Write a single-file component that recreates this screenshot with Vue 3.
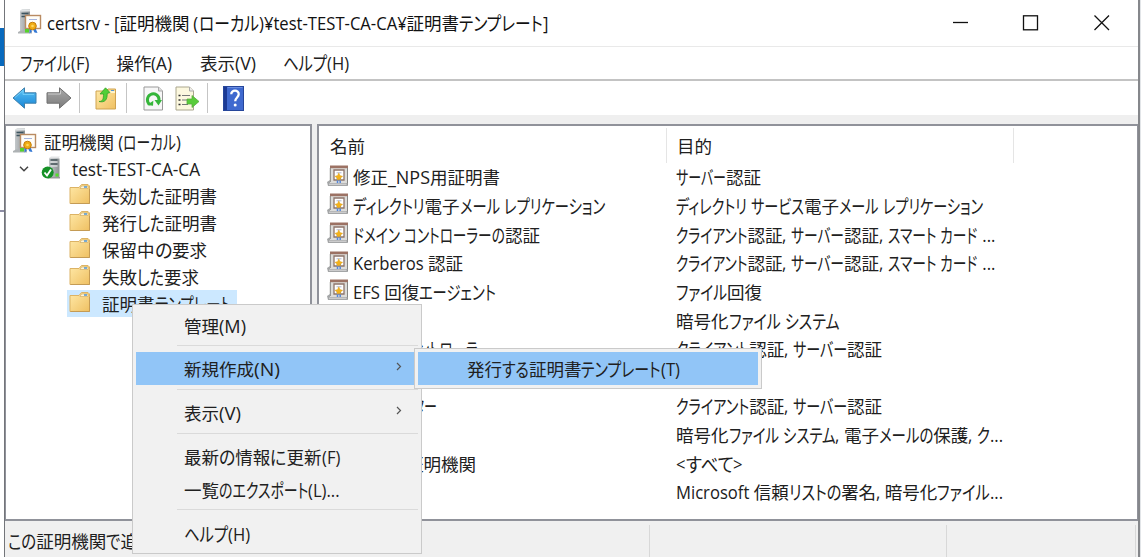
<script setup>
const treeItems = [
  { text: '失効した証明書', w: 115 },
  { text: '発行した証明書', w: 115 },
  { text: '保留中の要求', w: 105 },
  { text: '失敗した要求', w: 97 },
  { text: '証明書テンプレート', w: 129, selected: true },
]

const menus = [
  { text: 'ファイル(F)', w: 69 },
  { text: '操作(A)', w: 56 },
  { text: '表示(V)', w: 56 },
  { text: 'ヘルプ(H)', w: 66 },
]

const rows = [
  { name: '修正_NPS用証明書', nw: 147, use: 'サーバー認証', uw: 85 },
  { name: 'ディレクトリ電子メール レプリケーション', nw: 252, use: 'ディレクトリ サービス電子メール レプリケーション', uw: 307 },
  { name: 'ドメイン コントローラーの認証', nw: 187, use: 'クライアント認証, サーバー認証, スマート カード ...', uw: 319 },
  { name: 'Kerberos 認証', nw: 110, use: 'クライアント認証, サーバー認証, スマート カード ...', uw: 319 },
  { name: 'EFS 回復エージェント', nw: 143, use: 'ファイル回復', uw: 86 },
  { name: '', nw: 0, use: '暗号化ファイル システム', uw: 163 },
  { name: 'ドメイン コントローラー', nw: 138, use: 'クライアント認証, サーバー認証', uw: 206 },
  { name: '', nw: 0, use: '', uw: 0 },
  { name: 'コンピューター', nw: 84, use: 'クライアント認証, サーバー認証', uw: 206 },
  { name: '', nw: 0, use: '暗号化ファイル システム, 電子メールの保護, ク...', uw: 327 },
  { name: '下位の証明機関', nw: 123, use: '<すべて>', uw: 67 },
  { name: '', nw: 0, use: 'Microsoft 信頼リストの署名, 暗号化ファイル...', uw: 327 },
]

const context = [
  { text: '管理(M)', w: 62 },
  { sep: true },
  { text: '新規作成(N)', w: 96, sub: true, hot: true },
  { sep: true },
  { text: '表示(V)', w: 57, sub: true },
  { sep: true },
  { text: '最新の情報に更新(F)', w: 156 },
  { text: '一覧のエクスポート(L)...', w: 156 },
  { sep: true },
  { text: 'ヘルプ(H)', w: 66 },
]

/* Sets a label in proportional kana: ideographs keep their full width,
   kana runs are condensed so that the label takes the given width. */
const vFit = {
  mounted(el, { value }) {
    const { text, w } = value
    const runs = text.match(/[\u3040-\u30ff]+|[\u4e00-\u9fff]+|[^\u3040-\u30ff\u4e00-\u9fff]+/g) || []
    const parts = runs.map((run) => {
      const span = document.createElement('span')
      const kind = /[\u3040-\u30ff]/.test(run) ? 'kana' : /[\u4e00-\u9fff]/.test(run) ? 'kanji' : 'latin'
      span.className = `run ${kind}`
      span.textContent = run
      el.appendChild(span)
      return { span, kind }
    })
    parts.forEach((p) => { p.w = p.span.getBoundingClientRect().width })
    const sum = (k) => parts.filter((p) => p.kind === k).reduce((s, p) => s + p.w, 0)
    const hasKana = sum('kana') > 0
    const latin = hasKana ? 0.95 : (w - sum('kanji')) / (sum('latin') || 1)
    const kana = hasKana ? (w - sum('kanji') - sum('latin') * latin) / sum('kana') : 1
    parts.forEach((p) => {
      const k = p.kind === 'kana' ? kana : p.kind === 'latin' ? latin : 1
      p.span.style.width = `${p.w * k}px`
      p.span.style.transform = `scale(${k}, ${p.kind === 'kana' ? 1.1 : 1})`
    })
  },
}
</script>

<template>
  <div class="screen">
    <svg width="0" height="0" class="defs">
      <defs>
        <linearGradient id="gFolder" x1="0" y1="0" x2="1" y2="1"><stop offset="0" stop-color="#ffe9a8" /><stop offset="1" stop-color="#efc062" /></linearGradient>
        <linearGradient id="gBlue" x1="0" y1="0" x2="0" y2="1"><stop offset="0" stop-color="#5cc3f5" /><stop offset="1" stop-color="#1684d6" /></linearGradient>
        <linearGradient id="gGray" x1="0" y1="0" x2="0" y2="1"><stop offset="0" stop-color="#a8a8a8" /><stop offset="1" stop-color="#7c7c7c" /></linearGradient>
        <linearGradient id="gTower" x1="0" y1="0" x2="1" y2="0"><stop offset="0" stop-color="#c4c8ca" /><stop offset="1" stop-color="#8b9092" /></linearGradient>
        <symbol id="ca" viewBox="0 0 24 26">
          <path d="M2 2l2-1.500h8v22H2z" fill="url(#gTower)" /><path d="M2 2l2-1.500h8v2H2z" fill="#dfe3e5" />
          <path d="M3.500 4.500h7M3.500 7.500h7" stroke="#3c5560" stroke-width="1.300" /><path d="M0 23l3-1.500h11v3H0z" fill="#aeb2b4" />
          <rect x="7.500" y="6.500" width="15" height="13" fill="#fffdf8" stroke="#b98b62" stroke-width="1.400" />
          <path d="M11 10.500h8" stroke="#a7b5dd" /><rect x="7" y="20" width="4" height="3.500" fill="#55d32b" />
          <path d="M12 18l-.5 6.500 2-1.500v-4zM17 18l2.500 6-3-.5-2-4z" fill="#3478d4" />
          <circle cx="14.500" cy="17" r="3.800" fill="#f0ac13" stroke="#c57c08" /><circle cx="14.500" cy="17" r="1.300" fill="#ffd75d" />
        </symbol>
        <symbol id="server" viewBox="0 0 20 24">
          <path d="M8 2l2-1.500h9L17 3H8z" fill="#e3e5e6" /><path d="M8 2.500h10.500V21H8z" fill="url(#gTower)" />
          <path d="M9.500 4h7M9.500 8h7" stroke="#47555b" stroke-width="1.400" /><path d="M9.500 6h7M9.500 10h7" stroke="#eef1f2" />
          <path d="M7 21h12v1.500H7z" fill="#999" /><rect x="14.500" y="17.500" width="3" height="3" fill="#55df2a" />
          <circle cx="6.700" cy="16.500" r="6" fill="#159126" /><path d="M3.500 16.500l2.500 3 4-6" fill="none" stroke="#fff" stroke-width="1.900" />
        </symbol>
        <symbol id="folder" viewBox="0 0 22 21">
          <path d="M1 3.500h9l2.500-3h6.500l1.500 1.500v17.500H1z" fill="url(#gFolder)" stroke="#dcb365" />
          <path d="M11 4.500l1.500-2.500h6.500v2.500z" fill="#fff5d8" stroke="#c9a45c" stroke-width=".6" /><path d="M15 3h3" stroke="#4e95d3" stroke-width="1.500" />
          <path d="M1.500 19.500h19V5" stroke="#c49b55" fill="none" />
        </symbol>
        <symbol id="template" viewBox="0 0 22 22">
          <path d="M3 1.500h18v19H3z" fill="#dcdcda" /><path d="M3 .5h18v2.700H3z" fill="#9c7264" />
          <path d="M3.300 3v14M20.500 3v17.500" stroke="#858583" /><path d="M0 17l3-2v3h17.500v3H1z" fill="#a4a6a7" />
          <path d="M2 19.200h17.500" stroke="#dedede" /><path d="M7 5h10v10H7z" fill="#fff" stroke="#8d746b" stroke-width="1.300" />
          <path d="M9.500 7.800h5" stroke="#aeb7d0" /><path d="M10.500 13v5M13.200 13v5" stroke="#5486dc" stroke-width="1.500" />
          <path d="M11.800 7.800l1.200 2.700 2.700.8-2 1.600-.3 2.400-1.600-1-1.600 1-.3-2.400-2-1.600 2.700-.8z" fill="#f3b21b" stroke="#d79a22" stroke-width=".4" />
        </symbol>
      </defs>
    </svg>

    <div class="edge left"><i class="blue"></i><i class="tick"></i></div>
    <div class="window">
      <header class="title">
        <svg class="ca"><use href="#ca" /></svg>
        <span class="t caption" v-fit="{ text: 'certsrv - [証明機関 (ローカル)¥test-TEST-CA-CA¥証明書テンプレート]', w: 501 }"></span>
        <svg class="controls" width="157" height="16" viewBox="0 0 157 16" fill="none" stroke="#111" stroke-width="1.300">
          <path d="M0 7.500h15" /><rect x="70.500" y=".8" width="14" height="14" /><path d="M141.500.5l14.500 14.500M156 .5L141.500 15" />
        </svg>
      </header>
      <nav class="menubar"><span v-for="m in menus" :key="m.text" class="t" v-fit="m"></span></nav>
      <div class="toolbar">
        <svg class="arrow" width="25" height="22" viewBox="0 0 25 22"><path d="M1 11L12.500.8v5H24v10.400H12.500v5z" fill="url(#gBlue)" stroke="#3c7fab" /><path d="M3 10.500l8-7v4h11" fill="none" stroke="#8cddff" opacity=".6" /></svg>
        <svg class="arrow fwd" width="26" height="22" viewBox="0 0 26 22"><path d="M25 11L13.500.8v5H1v10.400h12.500v5z" fill="url(#gGray)" stroke="#707070" /><path d="M2 7h12.500V3.500" fill="none" stroke="#ccc" /></svg>
        <i class="bar b1"></i>
        <svg width="22" height="23" viewBox="0 0 22 23"><path d="M1 4h10l2-2h7.500v20H1z" fill="url(#gFolder)" stroke="#cfa351" /><path d="M13 5h7" stroke="#fff2c8" stroke-width="2" /><path d="M16 3.500h3" stroke="#4e95d3" /><path d="M4 14.500c4 0 4.500-3 4.500-7.500H5L10.500.8 15 5.500l-2.800 1c.3 6-2.200 9.500-8.200 8z" fill="#50cf37" stroke="#2d9b21" stroke-width=".7" /></svg>
        <i class="bar b2"></i>
        <svg width="21" height="25" viewBox="0 0 21 25"><path d="M1 1h14.500l4 4v19H1z" fill="#f7f7f7" stroke="#999" /><path d="M15.500 1v4h4" fill="#ddd" stroke="#aaa" /><path d="M7 18.500A5.800 5.800 0 1 1 16 14" fill="none" stroke="#35b63a" stroke-width="3" /><path d="M11.500 14h7.500L15.500 19.500z" fill="#35b63a" /><path d="M4 19l6 .8.3-5z" fill="#35b63a" /></svg>
        <svg class="export" width="25" height="25" viewBox="0 0 25 25"><path d="M1 1h13.500l4 4v19H1z" fill="#fcf8df" stroke="#aaa68e" /><path d="M14.500 1v4h4" fill="#eee" stroke="#aaa" /><path d="M3.500 9.500h2M3.500 14h2M3.500 18.500h2" stroke="#333" stroke-width="1.700" /><path d="M7 9.500h8M7 14h5M7 18.500h6" stroke="#777" stroke-width="1.200" /><path d="M12 13h5V9.500l7 6-7 6V18h-5z" fill="#59cc3a" stroke="#58ad3e" stroke-width=".8" /></svg>
        <i class="bar b3"></i>
        <svg class="help" width="21" height="25" viewBox="0 0 21 25"><rect x=".5" y=".5" width="20" height="24" fill="#3f69cf" stroke="#26469a" /><path d="M1 1h3v23H1z" fill="#1c3a94" /><path d="M4.500 1.500h15" stroke="#6b8ee1" /><path d="M8.300 8.300C8 3.500 16 3.500 15.700 8.300c0 3-3.500 3.500-3.500 7" fill="none" stroke="#fff" stroke-width="2.300" /><circle cx="12.200" cy="19" r="1.500" fill="#fff" /></svg>
      </div>
      <main class="panes">
        <section class="tree">
          <div class="node root"><svg class="ca"><use href="#ca" /></svg><span class="t" v-fit="{ text: '証明機関 (ローカル)', w: 137 }"></span></div>
          <div class="node ca-node">
            <svg class="chev" width="10" height="6" viewBox="0 0 10 6"><path d="M1 .8l4 4 4-4" fill="none" stroke="#444" stroke-width="1.500" /></svg>
            <svg class="server"><use href="#server" /></svg><span class="t" v-fit="{ text: 'test-TEST-CA-CA', w: 128 }"></span>
          </div>
          <div v-for="n in treeItems" :key="n.text" class="node leaf">
            <div class="hit" :class="{ selected: n.selected }"><svg class="folder"><use href="#folder" /></svg><span class="t" v-fit="n"></span></div>
          </div>
        </section>
        <section class="list">
          <div class="head"><div class="c1"><span class="t" v-fit="{ text: '名前', w: 35 }"></span></div><div class="c2"><span class="t" v-fit="{ text: '目的', w: 35 }"></span></div></div>
          <div v-for="(r, i) in rows" :key="i" class="row">
            <div class="name"><svg v-if="i < 5" class="template"><use href="#template" /></svg><i v-else class="template"></i><span class="t" v-fit="{ text: r.name, w: r.nw }"></span></div>
            <span class="t" v-fit="{ text: r.use, w: r.uw }"></span>
          </div>
        </section>
      </main>
      <footer class="status">
        <div class="s1"><span class="t" v-fit="{ text: 'この証明機関で追', w: 130 }"></span></div>
        <div class="s2"></div><div class="s3"></div>
      </footer>
    </div>
    <div class="edge right"></div>

    <div class="popup context">
      <template v-for="(c, i) in context" :key="i">
        <div v-if="c.sep" class="sep"></div>
        <div v-else class="item" :class="{ hot: c.hot }">
          <span class="t" v-fit="c"></span>
          <svg v-if="c.sub" width="6" height="9" viewBox="0 0 6 9"><path d="M1 1l3.500 3.500L1 8" fill="none" stroke="#555" stroke-width="1.200" /></svg>
        </div>
      </template>
    </div>
    <div class="popup submenu"><div class="item hot"><span class="t" v-fit="{ text: '発行する証明書テンプレート(T)', w: 213 }"></span></div></div>
  </div>
</template>

<style>
body { margin: 0; overflow: hidden; background: #fff; }
.run { display: inline-block; white-space: pre; transform-origin: 0 50%; }
.run.kana { font-feature-settings: "palt"; }
.run.latin { font-family: "Open Sans", "Noto Sans", "Noto Sans CJK JP", sans-serif; }
</style>

<style scoped>
.screen { position: relative; display: flex; width: 1141px; height: 557px; overflow: hidden; background: #fff; color: #202020; font: 17.5px/24px "Noto Sans CJK JP", sans-serif; }
.defs { position: absolute; }
.t { display: inline-block; flex: none; height: 24px; line-height: 24px; white-space: nowrap; }
svg { flex: none; display: block; }
.edge.left { width: 4px; flex: none; }
.edge.right { width: 1px; flex: none; background: #e2e5e8; }
.edge i { display: block; }
.blue { height: 38px; margin-top: 28px; background: #0869bd; }
.tick { height: 2px; margin-top: 144px; background: #8d8da5; }
.window { box-sizing: border-box; width: 1136px; height: 557px; border-left: 1px solid #73757a; border-right: 2px solid #85878b; display: flex; flex-direction: column; }
.title { box-sizing: border-box; height: 47px; flex: none; border-bottom: 1px solid #e9e9e9; display: flex; align-items: center; padding-left: 13px; }
.ca { width: 24px; height: 26px; }
.title .ca { margin-top: -3px; }
.caption { margin-left: 5px; margin-top: -1px; color: #111; }
.controls { margin-left: auto; margin-right: 28px; margin-top: -1px; }
.menubar { height: 32px; flex: none; border-bottom: 2px solid #c3c3c3; display: flex; align-items: center; gap: 27.5px; padding-left: 15px; }
.toolbar { height: 34px; flex: none; display: flex; align-items: center; padding-left: 7px; }
.fwd { margin-left: 9px; }
.bar { width: 1px; height: 30px; background: #c5c5c5; flex: none; }
.b1 { margin: 0 15px 0 7px; }
.b2 { margin: 0 16px 0 9px; }
.b3 { margin: 0 15px 0 7px; }
.export { margin-left: 11px; }
.panes { height: 397px; flex: none; box-sizing: border-box; padding-top: 9px; background: #efefef; display: flex; gap: 5px; }
.tree, .list { box-sizing: border-box; height: 397px; border: 2px solid #90929a; background: #fff; }
.tree { width: 307px; border-left-width: 1px; padding-top: 2px; }
.list { flex: 1; border-right-width: 1px; }
.node { height: 27px; display: flex; align-items: center; }
.root { padding-left: 7px; }
.root .t { margin-left: 7px; }
.root .ca { margin-top: -1px; }
.ca-node { padding-left: 13px; }
.server { width: 20px; height: 24px; margin-left: 12px; margin-top: -2px; }
.ca-node .t { margin-left: 11px; }
.leaf { padding-left: 61px; }
.hit { height: 27px; display: flex; align-items: center; padding: 0 6px 0 2px; }
.selected { background: #cce8ff; }
.folder { width: 22px; height: 21px; margin-top: -3px; }
.leaf .t { margin-left: 11px; }
.head { height: 37px; display: flex; }
.c1, .c2 { box-sizing: border-box; height: 35px; margin-top: 2px; padding: 6px 0 0 11px; border-right: 1px solid #e5e5e5; }
.c1 { width: 348px; }
.c2 { width: 347px; padding-left: 10px; }
.row { height: 28.65px; display: flex; align-items: center; }
.name { width: 357px; display: flex; align-items: center; }
.template { width: 22px; height: 22px; flex: none; margin: -3px 4px 0 8px; }
.status { flex: 1; margin-top: 9px; background: #f0f0f0; display: flex; padding-top: 4px; }
.status > div { box-sizing: border-box; height: 32px; border-right: 1px solid #d8d8d8; }
.s1 { width: 645px; padding: 4px 0 0 3px; }
.s2 { width: 297px; }
.s3 { width: 189px; }
.popup { position: absolute; box-sizing: border-box; background: #f1f1f1; border: 1px solid #cacaca; z-index: 2; }
.context { left: 132px; top: 304px; width: 290px; height: 250px; padding: 3px 7px 0 3px; }
.submenu { left: 414px; top: 348px; width: 348px; height: 41px; padding: 3px; z-index: 3; }
.item { box-sizing: border-box; height: 33px; display: flex; align-items: center; justify-content: space-between; padding: 2px 12px 0 48px; }
.item svg { margin-top: -5px; }
.submenu .item { padding: 1px 0 0 49px; }
.hot { background: #91c5f7; }
.sep { height: 10.8px; margin: 0 -4px 0 41px; background: linear-gradient(#dadada, #dadada) 0 4px / 100% 1px no-repeat; }
</style>
